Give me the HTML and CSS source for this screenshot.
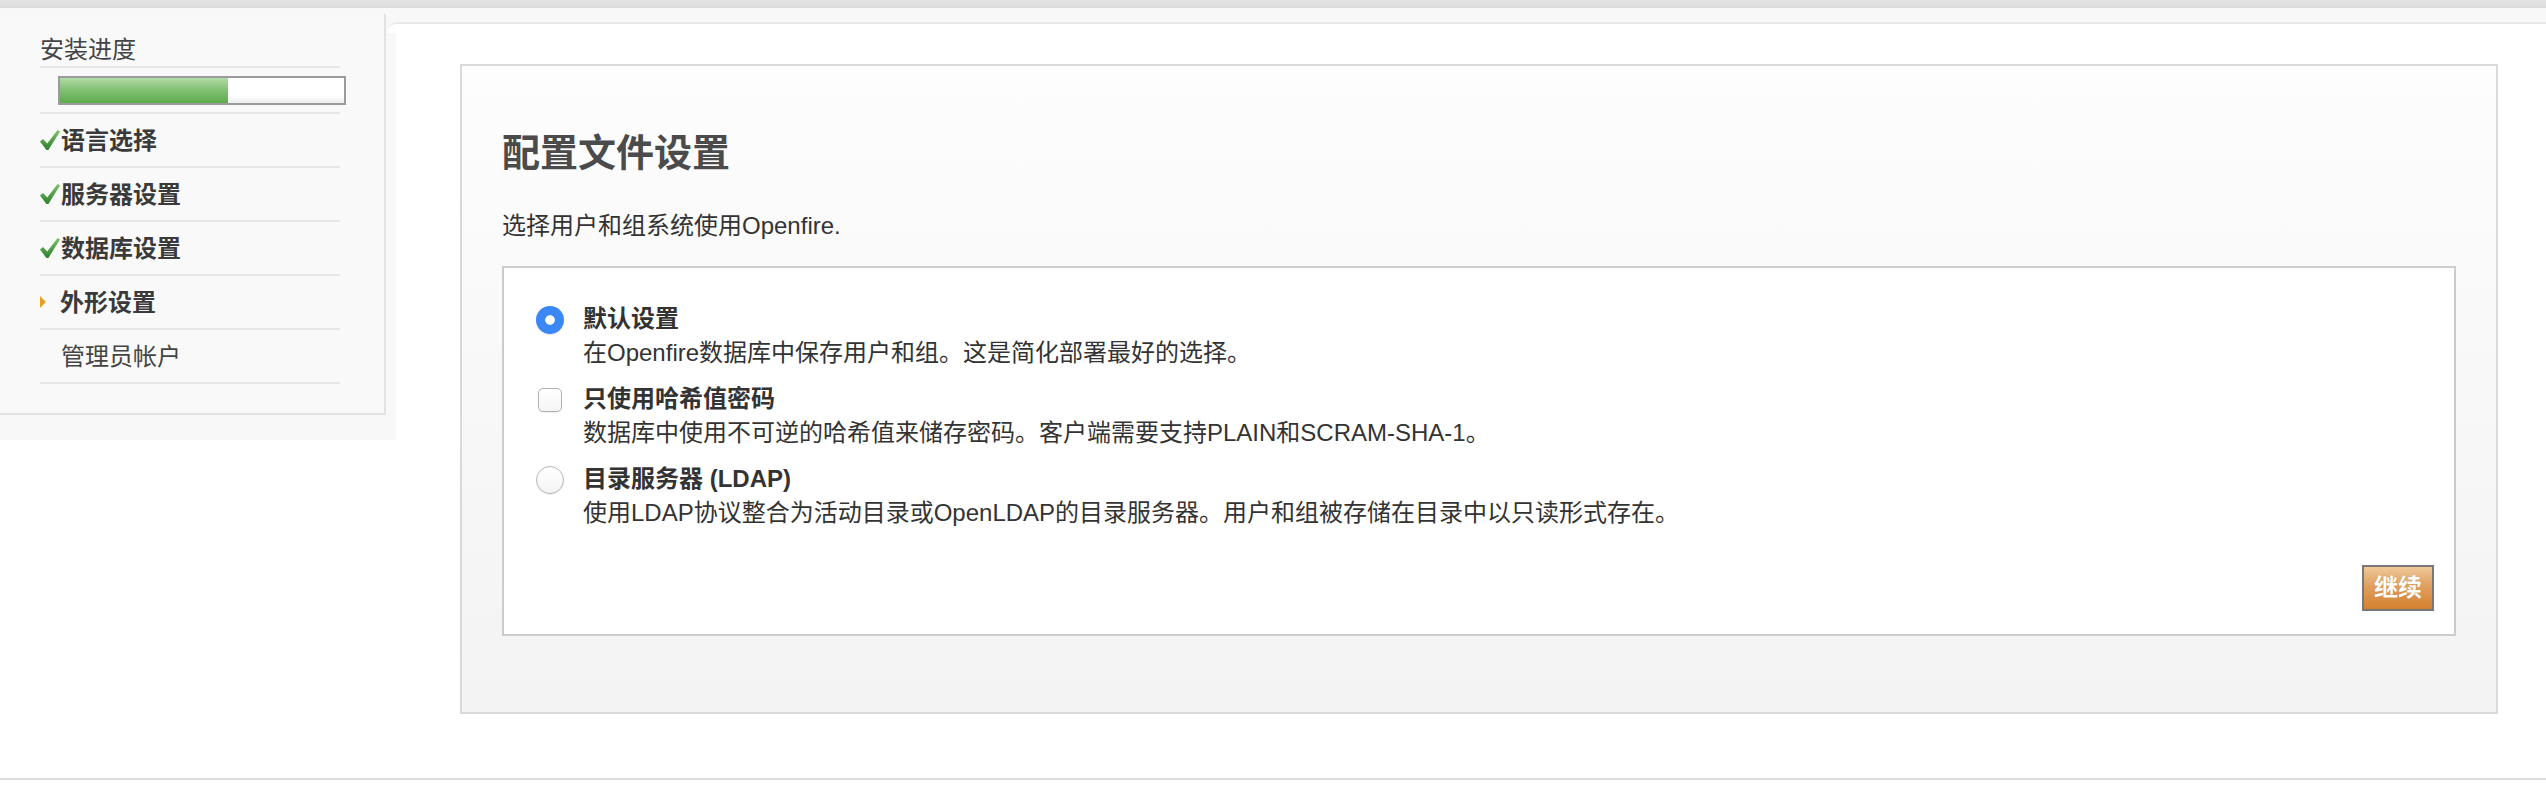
FILE: index.html
```html
<!DOCTYPE html>
<html lang="zh-CN">
<head>
<meta charset="utf-8">
<title>Openfire 安装</title>
<link rel="stylesheet" href="styles.css">
</head>
<body>
<div class="topbar"></div>
<div class="layout">
  <aside class="leftcol">
    <div class="sidebar">
      <div class="sb-title">安装进度</div>
      <div class="sb-progress">
        <div class="bar"><div class="fill" style="width:59%"></div></div>
      </div>
      <ul class="steps">
        <li class="step done"><svg class="check" viewBox="0 0 20 22" width="20" height="22"><defs><linearGradient id="cg" x1="0" y1="0" x2="0" y2="1"><stop offset="0" stop-color="#7cc46a"/><stop offset="1" stop-color="#2f7f2c"/></linearGradient></defs><path d="M0 12.5 L3 10 L7.2 14.6 L17.6 1 L20 2.4 L8.4 21 L6.4 21 Z" fill="url(#cg)"/></svg><span class="label">语言选择</span></li>
        <li class="step done"><svg class="check" viewBox="0 0 20 22" width="20" height="22"><path d="M0 12.5 L3 10 L7.2 14.6 L17.6 1 L20 2.4 L8.4 21 L6.4 21 Z" fill="url(#cg)"/></svg><span class="label">服务器设置</span></li>
        <li class="step done"><svg class="check" viewBox="0 0 20 22" width="20" height="22"><path d="M0 12.5 L3 10 L7.2 14.6 L17.6 1 L20 2.4 L8.4 21 L6.4 21 Z" fill="url(#cg)"/></svg><span class="label">数据库设置</span></li>
        <li class="step current"><span class="arrow"></span><span class="label">外形设置</span></li>
        <li class="step todo"><span class="label">管理员帐户</span></li>
      </ul>
    </div>
  </aside>
  <main class="main">
    <div class="panel">
      <section class="box">
        <h1 class="heading">配置文件设置</h1>
        <p class="intro">选择用户和组系统使用Openfire.</p>
        <div class="inner">
          <div class="option">
            <span class="ctl"><span class="radio on"></span></span>
            <div class="otext">
              <div class="otitle">默认设置</div>
              <div class="odesc">在Openfire数据库中保存用户和组。这是简化部署最好的选择。</div>
            </div>
          </div>
          <div class="option">
            <span class="ctl"><span class="checkbox"></span></span>
            <div class="otext">
              <div class="otitle">只使用哈希值密码</div>
              <div class="odesc">数据库中使用不可逆的哈希值来储存密码。客户端需要支持PLAIN和SCRAM-SHA-1。</div>
            </div>
          </div>
          <div class="option">
            <span class="ctl"><span class="radio"></span></span>
            <div class="otext">
              <div class="otitle">目录服务器 (LDAP)</div>
              <div class="odesc">使用LDAP协议整合为活动目录或OpenLDAP的目录服务器。用户和组被存储在目录中以只读形式存在。</div>
            </div>
          </div>
          <div class="actions"><button class="btn" type="button">继续</button></div>
        </div>
      </section>
    </div>
  </main>
</div>
<div class="footer-line"></div>
</body>
</html>
```

FILE: styles.css
```css
html, body {
  margin: 0;
  padding: 0;
  background: #fff;
}
body {
  font-family: "Liberation Sans", "Noto Sans CJK SC", sans-serif;
  color: #333;
  width: 2546px;
  height: 790px;
  overflow: hidden;
}
.topbar {
  height: 8px;
  background: linear-gradient(#e3e3e3, #e0e0e0 70%, #d8d8d8);
}
.layout {
  display: flex;
  height: 770px;
}
.leftcol {
  width: 387px;
  flex: none;
  height: 432px;
  background: #f8f8f8;
  padding-top: 6px;
  box-sizing: border-box;
}
.sidebar {
  width: 386px;
  height: 401px;
  box-sizing: border-box;
  border-right: 2px solid #e2e2e2;
  border-bottom: 2px solid #e2e2e2;
  background: #f9f9f9;
  padding-left: 40px;
}
.sb-title {
  width: 300px;
  padding-top: 24px;
  padding-bottom: 4px;
  font-size: 24px;
  line-height: 24px;
  color: #444;
  border-bottom: 2px solid #e6e6e6;
  white-space: nowrap;
}
.sb-progress {
  width: 300px;
  padding: 8px 0 7px;
  border-bottom: 2px solid #e6e6e6;
}
.bar {
  margin-left: 18px;
  width: 288px;
  height: 29px;
  box-sizing: border-box;
  border: 2px solid #9b9b9b;
  background: linear-gradient(#ffffff, #ffffff 70%, #ececec);
}
.fill {
  height: 100%;
  background: linear-gradient(#b3dba7, #84c276 45%, #5dab4c);
}
.steps {
  list-style: none;
  margin: 0;
  padding: 0;
  width: 300px;
}
.step {
  display: flex;
  align-items: center;
  height: 52px;
  border-bottom: 2px solid #e6e6e6;
  font-size: 24px;
  line-height: 24px;
  color: #3a3a3a;
  white-space: nowrap;
}
.label {
  position: relative;
  top: 1px;
}
.step.done, .step.current {
  font-weight: bold;
}
.check {
  flex: none;
  margin-right: 1px;
}
.arrow {
  flex: none;
  width: 0;
  height: 0;
  border-left: 6px solid #e3a126;
  border-top: 6.5px solid transparent;
  border-bottom: 6.5px solid transparent;
  margin-right: 14px;
}
.step.todo {
  padding-left: 21px;
  color: #444;
}
.main {
  flex: 1;
  min-width: 0;
  display: flex;
  flex-direction: column;
  background:
    linear-gradient(#f8f8f8, #f8f8f8) 0 0 / 100% 30px no-repeat,
    linear-gradient(#f8f8f8, #f8f8f8) 0 0 / 9px 432px no-repeat,
    #fff;
}
.panel {
  flex: 1;
  margin-top: 14px;
  border-top: 2px solid #e9e9e9;
  border-top-left-radius: 10px;
  background:
    linear-gradient(#fff, #fff) 0 0 / 100% 9px no-repeat,
    linear-gradient(#fff, #fff) 9px 0 / 100% 100% no-repeat;
  padding: 40px 48px 0 73px;
}
.box {
  border: 2px solid #d9d9d9;
  background: linear-gradient(#fdfdfd, #f3f3f3);
  padding: 0 40px 76px 40px;
}
.heading {
  margin: 64px 0 0;
  font-size: 38px;
  line-height: 46px;
  font-weight: bold;
  color: #4b4b4b;
}
.intro {
  margin: 34px 0 24px;
  font-size: 24px;
  line-height: 32px;
  color: #333;
}
.inner {
  border: 2px solid #cccccc;
  background: #fff;
  padding: 35px 20px 23px 32px;
}
.option {
  display: flex;
  margin-bottom: 14px;
}
.option:last-of-type {
  margin-bottom: 0;
}
.ctl {
  flex: none;
  width: 28px;
  margin-right: 19px;
  padding-top: 3px;
  display: flex;
  justify-content: center;
  align-items: flex-start;
}
.radio {
  display: block;
  width: 28px;
  height: 28px;
  box-sizing: border-box;
  border-radius: 50%;
  border: 1px solid #b6b6b6;
  background: linear-gradient(#ffffff, #f4f4f4);
  box-shadow: 0 1px 1px rgba(0,0,0,0.08);
}
.radio.on {
  border: none;
  background: radial-gradient(circle, #ffffff 0 4.4px, #3b87f5 5.2px);
}
.checkbox {
  display: block;
  margin-top: 2px;
  width: 24px;
  height: 24px;
  box-sizing: border-box;
  border: 1px solid #b0b0b0;
  border-radius: 5px;
  background: linear-gradient(#ffffff, #f5f5f5);
  box-shadow: 0 1px 1px rgba(0,0,0,0.07);
}
.otext {
  min-width: 0;
}
.otitle {
  font-size: 24px;
  line-height: 32px;
  font-weight: bold;
  color: #333;
  white-space: nowrap;
}
.odesc {
  margin-top: 2px;
  font-size: 24px;
  line-height: 32px;
  color: #333;
  white-space: nowrap;
}
.actions {
  margin-top: 36px;
  display: flex;
  justify-content: flex-end;
}
.btn {
  width: 72px;
  height: 46px;
  box-sizing: border-box;
  border: 2px solid #787878;
  border-radius: 0;
  padding: 0;
  background: linear-gradient(#efc898, #e0a05e 45%, #d4812e);
  color: #fff;
  font-family: "Liberation Sans", "Noto Sans CJK SC", sans-serif;
  font-size: 24px;
  line-height: 42px;
  font-weight: bold;
  text-shadow: 0 0 1px rgba(120,60,0,0.3);
}
.footer-line {
  height: 2px;
  background: #dcdcdc;
}
```
